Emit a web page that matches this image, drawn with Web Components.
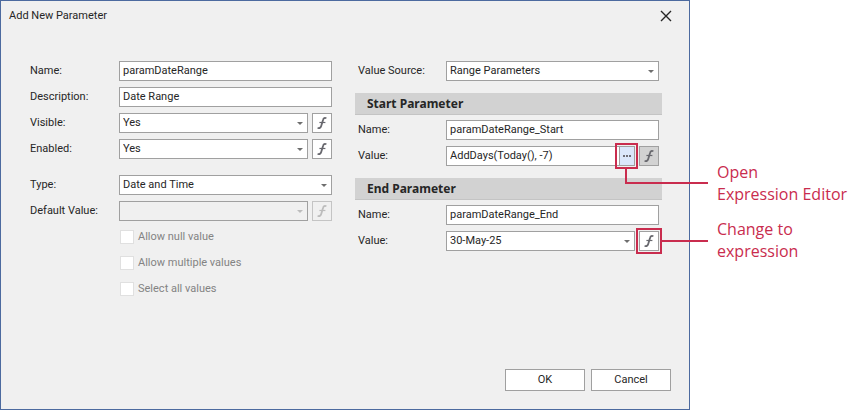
<!DOCTYPE html>
<html lang="en">
<head>
<meta charset="utf-8">
<title>Add New Parameter</title>
<style>
    :root {
        --dlg-color-back: #f0f0f0;
        --dlg-color-frame: #4c6a9f;
        --dlg-color-border: #a0a0a0;
        --dlg-color-text: #262626;
        --dlg-color-disabled: #838383;
        --dlg-color-mark: #c92c4e;
    }
    body {
        margin: 0;
        background: white;
        color: var(--dlg-color-text);
        font: 11px/20px Roboto, "DejaVu Sans Condensed", sans-serif;
    }
    main {
        display: flex;
        min-height: 100vh;
    }
</style>
</head>
<body>
<main>
    <param-dialog caption="Add New Parameter">
        <field-group slot="left">
            <param-field label="Name:" value="paramDateRange"></param-field>
            <param-field label="Description:" value="Date Range"></param-field>
            <param-field label="Visible:" type="select" value="Yes">
                <expression-button slot="after"></expression-button>
            </param-field>
            <param-field label="Enabled:" type="select" value="Yes">
                <expression-button slot="after"></expression-button>
            </param-field>
        </field-group>
        <field-group slot="left">
            <param-field label="Type:" type="select" value="Date and Time"></param-field>
            <param-field label="Default Value:" type="select" value="" disabled>
                <expression-button slot="after" disabled></expression-button>
            </param-field>
            <check-field label="Allow null value"></check-field>
            <check-field label="Allow multiple values"></check-field>
            <check-field label="Select all values"></check-field>
        </field-group>

        <field-group slot="right" inset>
            <param-field label="Value Source:" type="select" value="Range Parameters"></param-field>
        </field-group>
        <field-group slot="right" caption="Start Parameter" inset>
            <param-field label="Name:" value="paramDateRange_Start"></param-field>
            <param-field label="Value:" value="AddDays(Today(), -7)">
                <callout-mark slot="inside" class="elbow"><ellipsis-button></ellipsis-button></callout-mark>
                <expression-button slot="after" pressed></expression-button>
            </param-field>
        </field-group>
        <field-group slot="right" caption="End Parameter" inset>
            <param-field label="Name:" value="paramDateRange_End"></param-field>
            <param-field label="Value:" type="select" value="30-May-25">
                <callout-mark slot="after"><expression-button></expression-button></callout-mark>
            </param-field>
        </field-group>
    </param-dialog>
    <callout-notes>
        <p>Open<br>Expression Editor</p>
        <p>Change to<br>expression</p>
    </callout-notes>
</main>

<script>
function attach(element, html) {
    const template = document.createElement('template')
    template.innerHTML = html
    element.attachShadow({ mode: 'open' })
    element.shadowRoot.appendChild(template.content.cloneNode(true))
}

class ParamDialog extends HTMLElement {
    constructor() {
        super()
        attach(this, `
            <style>
            :host {
                flex: 1;
                display: flex;
                flex-direction: column;
                box-sizing: border-box;
                border: 1px solid var(--dlg-color-frame);
                background: var(--dlg-color-back);
            }
            header {
                display: flex;
                align-items: center;
                justify-content: space-between;
                height: 30px;
                padding: 0 16px 0 8px;
            }
            h1 {
                margin: 0;
                font: inherit;
            }
            button {
                font: inherit;
                color: inherit;
            }
            .close {
                display: flex;
                padding: 1px;
                border: 0;
                background: none;
            }
            .columns {
                display: grid;
                grid-template-columns: 302fr 307fr;
                gap: 23px;
                padding: 30px 27px 20px 29px;
            }
            .column {
                display: flex;
                flex-direction: column;
            }
            .left {
                gap: 16px;
            }
            .right {
                gap: 12px;
            }
            footer {
                display: flex;
                justify-content: flex-end;
                gap: 6px;
                margin-top: auto;
                padding: 0 18px 18px;
            }
            footer button {
                width: 80px;
                height: 22px;
                padding: 0;
                border: 1px solid var(--dlg-color-border);
                background: white;
            }
            </style>
            <header>
                <h1></h1>
                <button class="close" aria-label="Close">
                    <svg width="12" height="12" viewBox="0 0 12 12"><path d="M1 1l10 10M11 1L1 11" stroke="#262626" stroke-width="1.4"/></svg>
                </button>
            </header>
            <div class="columns">
                <div class="column left"><slot name="left"></slot></div>
                <div class="column right"><slot name="right"></slot></div>
            </div>
            <footer>
                <button>OK</button>
                <button>Cancel</button>
            </footer>
        `)
        this.shadowRoot.querySelector("h1").textContent = this.getAttribute("caption")
    }
}

class FieldGroup extends HTMLElement {
    constructor() {
        super()
        attach(this, `
            <style>
            :host {
                display: block;
                --label-width: 89px;
            }
            :host([inset]) {
                --label-width: 88px;
            }
            h2 {
                box-sizing: border-box;
                height: 22px;
                margin: 0 0 5px;
                padding-left: 12px;
                border-bottom: 1px solid #c4c4c4;
                background: #d2d2d2;
                font: bold 12px/21px "Noto Sans", sans-serif;
            }
            .fields {
                display: flex;
                flex-direction: column;
                gap: 6px;
            }
            :host([inset]) .fields {
                padding: 0 3px;
            }
            </style>
            <div class="fields"><slot></slot></div>
        `)
        if (this.hasAttribute("caption")) {
            const heading = document.createElement("h2")
            heading.textContent = this.getAttribute("caption")
            this.shadowRoot.querySelector(".fields").before(heading)
        }
    }
}

class ParamField extends HTMLElement {
    constructor() {
        super()
        const isSelect = this.getAttribute("type") == "select"
        attach(this, `
            <style>
            :host {
                display: grid;
                grid-template-columns: var(--label-width) 1fr;
            }
            .editor {
                display: flex;
                gap: 4px;
            }
            .box {
                flex: 1;
                display: flex;
                align-items: center;
                box-sizing: border-box;
                height: 20px;
                border: 1px solid var(--dlg-color-border);
                background: white;
            }
            input, select {
                flex: 1;
                min-width: 0;
                height: 18px;
                margin: 0;
                padding: 0 3px;
                border: 0;
                outline: 0;
                appearance: none;
                background: none;
                font: inherit;
                line-height: 18px;
                color: inherit;
            }
            .caret {
                margin-right: 4px;
                fill: #6e6e6e;
                pointer-events: none;
            }
            :host([disabled]) .box {
                background: none;
            }
            :host([disabled]) .caret {
                fill: #bcbcbc;
            }
            </style>
            <label for="control"></label>
            <div class="editor">
                <div class="box">
                    ${isSelect
                        ? `<select id="control"><option></option></select>
                           <svg class="caret" width="6" height="3" viewBox="0 0 6 3"><path d="M0 0h6L3 3z"/></svg>`
                        : `<input id="control" type="text">`}
                    <slot name="inside"></slot>
                </div>
                <slot name="after"></slot>
            </div>
        `)
        const value = this.getAttribute("value")
        const control = this.shadowRoot.getElementById("control")
        this.shadowRoot.querySelector("label").textContent = this.getAttribute("label")
        if (isSelect)
            control.options[0].textContent = value
        else
            control.value = value
        control.disabled = this.hasAttribute("disabled")
    }
}

class CheckField extends HTMLElement {
    constructor() {
        super()
        attach(this, `
            <style>
            :host {
                display: flex;
                align-items: center;
                gap: 4px;
                height: 20px;
                padding-left: 90px;
                color: var(--dlg-color-disabled);
            }
            input {
                appearance: none;
                box-sizing: border-box;
                width: 14px;
                height: 14px;
                margin: 0;
                border: 1px solid #e0e0e0;
                background: white;
            }
            </style>
            <input id="check" type="checkbox" disabled>
            <label for="check"></label>
        `)
        this.shadowRoot.querySelector("label").textContent = this.getAttribute("label")
    }
}

class ExpressionButton extends HTMLElement {
    constructor() {
        super()
        attach(this, `
            <style>
            :host {
                display: block;
            }
            button {
                display: flex;
                align-items: center;
                justify-content: center;
                width: 20px;
                height: 20px;
                padding: 0;
                border: 1px solid var(--dlg-color-border);
                background: white;
                color: #68686e;
            }
            :host([pressed]) button {
                background: #d2d2d2;
            }
            :host([disabled]) button {
                border-color: #c4c4c4;
                background: none;
                color: #bcbcbc;
            }
            </style>
            <button aria-label="Expression">
                <svg width="10" height="12" viewBox="0 0 10 12" fill="none" stroke="currentColor">
                    <path d="M9.4 1.3C7.8.6 6.6 1 6.1 2.8L4.2 9C3.7 10.9 2.3 11.6.6 10.8" stroke-width="1.8"/>
                    <path d="M2.4 5.5h6" stroke-width="1.2"/>
                </svg>
            </button>
        `)
        this.shadowRoot.querySelector("button").disabled = this.hasAttribute("disabled")
    }
}

class EllipsisButton extends HTMLElement {
    constructor() {
        super()
        attach(this, `
            <style>
            :host {
                display: block;
            }
            button {
                display: flex;
                align-items: center;
                justify-content: center;
                width: 15px;
                height: 18px;
                padding: 0;
                border: 0;
                border-left: 1px solid var(--dlg-color-border);
                background: #dbe7fb;
            }
            </style>
            <button aria-label="Open Expression Editor">
                <svg width="8" height="2" viewBox="0 0 8 2"><path d="M0 0h2v2H0zM3 0h2v2H3zM6 0h2v2H6z" fill="#6e6e76"/></svg>
            </button>
        `)
    }
}

// frames a button and leads a line from it to its note
class CalloutMark extends HTMLElement {
    constructor() {
        super()
        attach(this, `
            <style>
            :host {
                display: block;
                position: relative;
            }
            .frame {
                position: absolute;
                inset: -3px;
                border: 2px solid var(--dlg-color-mark);
                pointer-events: none;
            }
            .line {
                position: absolute;
                top: 9px;
                left: 100%;
                width: 46px;
                margin-left: 3px;
                border-bottom: 2px solid var(--dlg-color-mark);
                pointer-events: none;
            }
            :host(.elbow) .frame {
                inset: -4px;
            }
            :host(.elbow) .line {
                top: 100%;
                left: 6px;
                width: 81px;
                height: 13px;
                margin: 4px 0 0;
                border-left: 2px solid var(--dlg-color-mark);
            }
            </style>
            <slot></slot>
            <div class="frame"></div>
            <div class="line"></div>
        `)
    }
}

class CalloutNotes extends HTMLElement {
    constructor() {
        super()
        attach(this, `
            <style>
            :host {
                display: flex;
                flex-direction: column;
                gap: 13px;
                box-sizing: border-box;
                width: 176px;
                padding: 161px 0 0 27px;
                color: var(--dlg-color-mark);
                font: 16px/22px "Open Sans", sans-serif;
            }
            ::slotted(p) {
                margin: 0;
            }
            </style>
            <slot></slot>
        `)
    }
}

customElements.define('param-dialog', ParamDialog)
customElements.define('field-group', FieldGroup)
customElements.define('param-field', ParamField)
customElements.define('check-field', CheckField)
customElements.define('expression-button', ExpressionButton)
customElements.define('ellipsis-button', EllipsisButton)
customElements.define('callout-mark', CalloutMark)
customElements.define('callout-notes', CalloutNotes)
</script>
</body>
</html>
